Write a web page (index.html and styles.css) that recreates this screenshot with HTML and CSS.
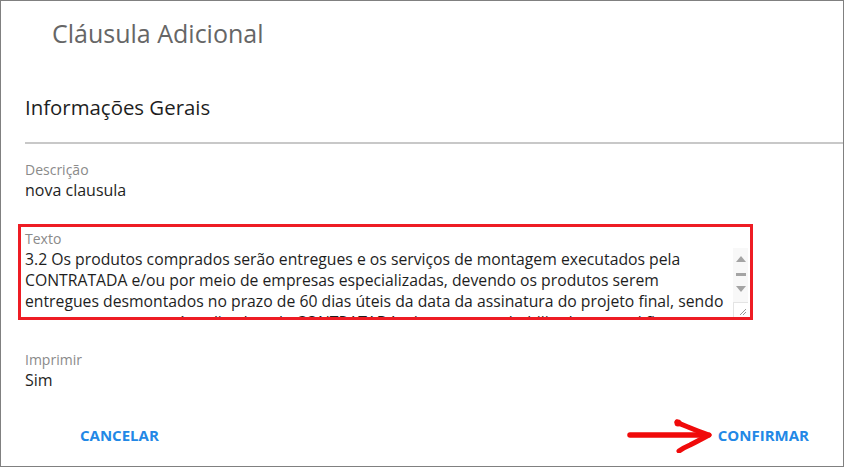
FILE: index.html
```html
<!DOCTYPE html>
<html lang="pt-BR">
<head>
<meta charset="utf-8">
<title>Cláusula Adicional</title>
<link rel="stylesheet" href="styles.css">
</head>
<body>
<div class="dialog">
  <h1 class="dialog-title">Cláusula Adicional</h1>
  <h2 class="section-title">Informações Gerais</h2>
  <hr class="divider">
  <div class="field">
    <div class="field-label">Descrição</div>
    <div class="field-value">nova clausula</div>
  </div>
  <div class="highlight">
    <div class="field-label textarea-label">Texto</div>
    <div class="textarea-row">
      <textarea class="text-input" wrap="off" readonly>3.2 Os produtos comprados serão entregues e os serviços de montagem executados pela
CONTRATADA e/ou por meio de empresas especializadas, devendo os produtos serem
entregues desmontados no prazo de 60 dias úteis da data da assinatura do projeto final, sendo
que a montagem será realizada pela CONTRATADA e/ou empresa habilitada para tal fim.</textarea>
      <div class="scrollbar">
        <div class="scroll-track">
          <span class="arrow-up"></span>
          <span class="thumb"></span>
          <span class="arrow-down"></span>
        </div>
        <div class="grip">
          <svg width="14" height="14" viewBox="0 0 14 14"><path d="M12 6 L6 12 M12 9 L9 12" stroke="#9a9a9a" stroke-width="1" fill="none"/></svg>
        </div>
      </div>
    </div>
  </div>
  <div class="field field-print">
    <div class="field-label">Imprimir</div>
    <div class="field-value">Sim</div>
  </div>
  <div class="actions">
    <button class="btn">CANCELAR</button>
    <div class="confirm-group">
      <svg class="red-arrow" width="88" height="36" viewBox="0 0 88 36">
        <path d="M4 18 L80 18" stroke="#f00a0a" stroke-width="5.5" stroke-linecap="round" fill="none"/>
        <path d="M51 5 Q54 7 62 10 Q74 15 83 18" stroke="#f00a0a" stroke-width="5" stroke-linecap="round" fill="none"/>
        <path d="M83 18 Q72 24 64 28 Q57 31 53 34" stroke="#f00a0a" stroke-width="5" stroke-linecap="round" fill="none"/>
        <circle cx="52" cy="6" r="3.5" fill="#f00a0a"/>
      </svg>
      <button class="btn">CONFIRMAR</button>
    </div>
  </div>
</div>
</body>
</html>
```
FILE: styles.css
```css
* { box-sizing: border-box; }
html, body { margin: 0; padding: 0; background: #ffffff; }
body { font-family: "Open Sans", "Liberation Sans", sans-serif; color: #212121; }

.dialog {
  width: 844px;
  height: 467px;
  border: 1px solid #808080;
  display: flex;
  flex-direction: column;
  background: #fff;
}

.dialog-title {
  margin: 15px 0 0 51px;
  font-size: 25px;
  line-height: 34px;
  font-weight: 500;
  color: #666666;
}

.section-title {
  margin: 44px 0 0 24px;
  font-size: 20.4px;
  line-height: 27px;
  font-weight: 400;
  color: #1e1e1e;
}

.divider {
  margin: 21px 0 0 24px;
  border: 0;
  border-top: 2px solid #c8c8c8;
  height: 0;
}

.field { margin: 17px 0 0 24px; }
.field-label {
  font-size: 14px;
  line-height: 18px;
  color: #8a8a8a;
}
.field-value {
  font-size: 16px;
  line-height: 22px;
  color: #1e1e1e;
}

.highlight {
  margin: 23px 0 0 17px;
  width: 735px;
  height: 96px;
  border: 3px solid #ee1c24;
  display: flex;
  flex-direction: column;
}
.textarea-label {
  padding: 3px 0 0 4px;
}
.textarea-row {
  display: flex;
  height: 69px;
}
.text-input {
  flex: 1;
  height: 69px;
  border: 0;
  outline: none;
  resize: none;
  overflow: hidden;
  padding: 1px 4px 0 4px;
  margin: 0;
  font-family: "Open Sans", "Liberation Sans", sans-serif;
  font-size: 15.75px;
  line-height: 21px;
  color: #1e1e1e;
  background: transparent;
}

.scrollbar {
  width: 15px;
  margin-right: 2px;
  display: flex;
  flex-direction: column;
}
.scroll-track {
  flex: 1;
  background: #f8f8f8;
  display: flex;
  flex-direction: column;
  align-items: center;
  padding-top: 8px;
}
.arrow-up {
  width: 0; height: 0;
  border-left: 5px solid transparent;
  border-right: 5px solid transparent;
  border-bottom: 6px solid #a4a4a4;
}
.thumb {
  width: 10px;
  height: 3px;
  background: #a4a4a4;
  margin-top: 11px;
}
.arrow-down {
  width: 0; height: 0;
  border-left: 5px solid transparent;
  border-right: 5px solid transparent;
  border-top: 6px solid #a4a4a4;
  margin-top: 10px;
}
.grip {
  height: 15px;
  background: #fff;
  border-top: 1px solid #e4e4e4;
  border-left: 1px solid #e4e4e4;
  display: flex;
  justify-content: flex-end;
  align-items: flex-end;
}
.grip svg { display: block; }

.field-print { margin-top: 31px; }

.actions {
  margin-top: 25px;
  padding: 0 34px 0 79px;
  display: flex;
  justify-content: space-between;
  align-items: center;
}
.confirm-group {
  display: flex;
  align-items: center;
  gap: 4px;
}
.red-arrow { display: block; margin-top: 1px; }
.btn {
  border: 0;
  background: transparent;
  padding: 0;
  font-family: "Open Sans", "Liberation Sans", sans-serif;
  font-size: 15px;
  font-weight: 700;
  line-height: 20px;
  color: #2288e6;
  cursor: pointer;
}
```
